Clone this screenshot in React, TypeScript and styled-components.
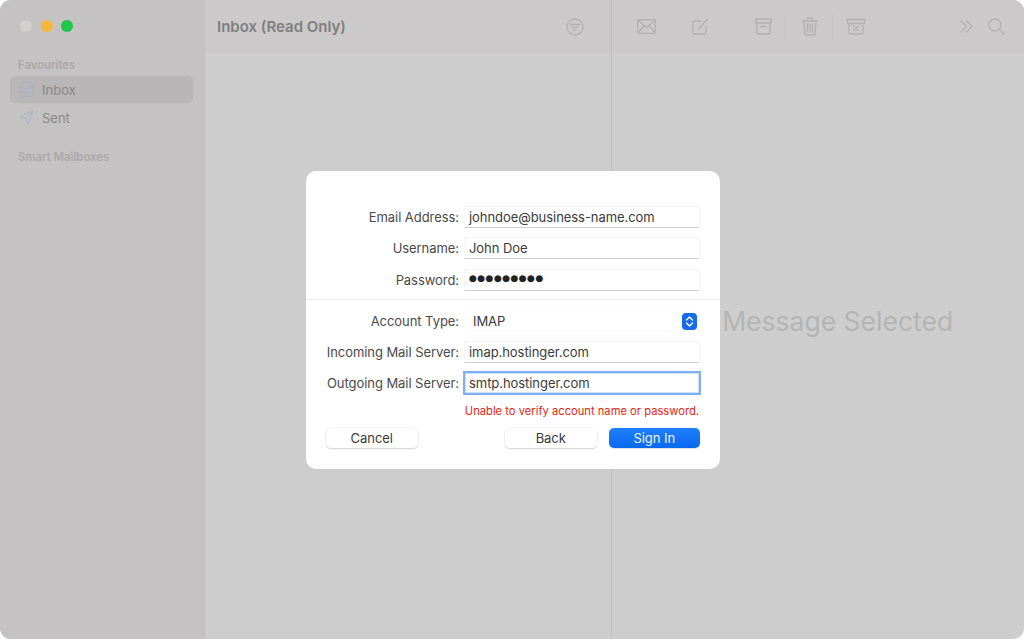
import React from 'react';
import styled, { createGlobalStyle } from 'styled-components';

const GlobalStyle = createGlobalStyle`
  html, body {
    margin: 0;
    padding: 0;
    background: #ffffff;
    font-family: Inter, 'Noto Sans', 'Liberation Sans', sans-serif;
  }
`;

const Window = styled.div`
  position: relative;
  display: flex;
  width: 1024px;
  height: 639px;
  border-radius: 11px;
  overflow: hidden;
  background: #cdcdcd;
`;

const Sidebar = styled.aside`
  display: flex;
  flex-direction: column;
  flex: 0 0 205px;
  padding: 20px 11px 0 10px;
  box-sizing: border-box;
  background: #c4c2c2;
  border-right: 1px solid #c1bfbf;
`;

const TrafficLights = styled.div`
  display: flex;
  gap: 8.5px;
  padding-left: 10px;
  height: 12px;
`;

const Light = styled.span<{ $color: string }>`
  width: 12px;
  height: 12px;
  border-radius: 50%;
  background: ${p => p.$color};
`;

const SectionTitle = styled.div<{ $top: number }>`
  margin: ${p => p.$top}px 0 0 8px;
  height: 14px;
  line-height: 14px;
  font-size: 11.3px;
  font-weight: 600;
  color: #aaa8a8;
`;

const NavRow = styled.div<{ $active?: boolean }>`
  display: flex;
  align-items: center;
  gap: 8px;
  height: 27px;
  margin-top: ${p => (p.$active ? 4 : 1)}px;
  padding-left: 9px;
  border-radius: 5px;
  font-size: 13px;
  color: #8a8888;
  background: ${p => (p.$active ? '#b8b6b6' : 'transparent')};
`;

const ListPane = styled.section`
  display: flex;
  flex-direction: column;
  flex: 0 0 407px;
  box-sizing: border-box;
  border-right: 1px solid #bfbdbd;
`;

const ListBar = styled.header`
  display: flex;
  align-items: center;
  justify-content: space-between;
  height: 53px;
  padding: 0 27px 0 12px;
  background: #cbc9c9;
`;

const ListTitle = styled.h1`
  margin: 0;
  font-size: 15px;
  font-weight: 600;
  color: #807e7e;
`;

const DetailPane = styled.section`
  display: flex;
  flex-direction: column;
  flex: 1;
`;

const DetailBar = styled.header`
  display: flex;
  align-items: center;
  height: 53px;
  padding-left: 25px;
  background: #cbc9c9;
`;

const ToolIcon = styled.svg<{ $gap?: number }>`
  flex: none;
  margin-left: ${p => p.$gap ?? 0}px;
  fill: none;
  stroke: #b2b0b0;
  stroke-width: 1.3;
  stroke-linecap: round;
  stroke-linejoin: round;
`;

const ToolSeparator = styled.span<{ $gap: number }>`
  flex: none;
  width: 1px;
  height: 26px;
  margin-left: ${p => p.$gap}px;
  background: #c6c4c4;
`;

const EmptyState = styled.div`
  flex: 1;
  display: flex;
  align-items: center;
  justify-content: center;
  padding: 0 4px 50px 0;
  font-size: 26.5px;
  color: #b4b4b4;
`;

const Dialog = styled.form`
  position: absolute;
  left: 306px;
  top: 171px;
  width: 414px;
  height: 298px;
  box-sizing: border-box;
  padding-top: 36px;
  display: flex;
  flex-direction: column;
  border-radius: 10px;
  background: #ffffff;
  color: #3a3a3a;
  font-size: 13px;
  letter-spacing: -0.06px;
`;

const FieldGroup = styled.div<{ $rows: string }>`
  display: grid;
  grid-template-columns: 153px 234px;
  grid-template-rows: ${p => p.$rows};
  column-gap: 6px;
  align-items: start;
`;

const Label = styled.label`
  line-height: 20px;
  text-align: right;
  color: #4a4a4a;
  white-space: nowrap;
`;

const TextField = styled.div<{ $focused?: boolean }>`
  height: 20px;
  line-height: 20px;
  padding-left: 4px;
  box-sizing: border-box;
  background: #ffffff;
  color: #3a3a3a;
  white-space: nowrap;
  box-shadow: ${p =>
    p.$focused
      ? '0 0 0 2px #7fb0f2, inset 0 0 0 0.5px #9ec4f5'
      : '0 1px 0 #cfcfcf, 0 0 0 1px #f5f5f5'};
`;

const Dots = styled.span`
  display: block;
  height: 20px;
  line-height: 17px;
  font-family: 'DejaVu Sans', sans-serif;
  font-size: 9px;
  letter-spacing: 0.45px;
  color: #222222;
`;

const Divider = styled.hr`
  height: 1px;
  margin: 9px 0 11px;
  border: 0;
  background: #ececec;
`;

const SelectField = styled.div`
  display: flex;
  align-items: center;
  justify-content: space-between;
  height: 20px;
  padding: 0 2px 0 8px;
  box-sizing: border-box;
  border-radius: 5px;
  box-shadow: 0 0 0 0.5px #f8f8f8;
  line-height: 18px;
`;

const ErrorText = styled.p`
  margin: 11px 21px 0 0;
  height: 14px;
  line-height: 14px;
  text-align: right;
  font-size: 11.2px;
  letter-spacing: 0;
  color: #ea2410;
`;

const Actions = styled.div`
  display: flex;
  gap: 12px;
  margin-top: 10px;
  padding: 0 20px;
`;

const Button = styled.button<{ $primary?: boolean; $spaced?: boolean }>`
  width: 91.5px;
  height: 20px;
  padding: 0;
  border: 0;
  border-radius: 5px;
  font: inherit;
  letter-spacing: inherit;
  margin-right: ${p => (p.$spaced ? 75.5 : 0)}px;
  color: ${p => (p.$primary ? '#f2f7ff' : '#3a3a3a')};
  background: ${p => (p.$primary ? 'linear-gradient(#1f7ffb, #0a68ee)' : '#ffffff')};
  box-shadow: ${p =>
    p.$primary ? '0 1px 1px rgba(0, 0, 0, 0.12)' : '0 0 0 0.5px #ececec, 0 1px 1.5px rgba(0, 0, 0, 0.25)'};
`;

const InboxIcon = () => (
  <svg width="15" height="15" viewBox="0 0 15 15" fill="none" stroke="#a3b2c6" strokeWidth="1">
    <rect x="0.5" y="0.5" width="14" height="14" rx="3" />
    <path d="M0.5 5h3.500l1 1.500h5l1-1.500h3.500M0.500 9.500h3.500l1 1.500h5l1-1.500h3.500" />
  </svg>
);

const SentIcon = () => (
  <svg width="15" height="15" viewBox="0 0 15 15" fill="none" stroke="#a3b4c9" strokeWidth="1" strokeLinejoin="round">
    <path d="M14 1L1 6.500l5.500 2L9 14.500zM14 1L6.500 8.500" />
  </svg>
);

const StepperIcon = () => (
  <svg width="15" height="17" viewBox="0 0 15 17">
    <rect width="15" height="17" rx="4" fill="#1769ee" />
    <path d="M4.500 7l3-3 3 3M4.500 10l3 3 3-3" fill="none" stroke="#ffffff" strokeWidth="1.400" strokeLinecap="round" strokeLinejoin="round" />
  </svg>
);

const App: React.FC = () => {
  return (
    <>
      <GlobalStyle />
      <Window>
        <Sidebar>
          <TrafficLights>
            <Light $color="#d4d0d0" />
            <Light $color="#f5b83d" />
            <Light $color="#1ec64a" />
          </TrafficLights>
          <SectionTitle $top={26}>Favourites</SectionTitle>
          <NavRow $active>
            <InboxIcon />
            Inbox
          </NavRow>
          <NavRow>
            <SentIcon />
            Sent
          </NavRow>
          <SectionTitle $top={19}>Smart Mailboxes</SectionTitle>
        </Sidebar>

        <ListPane>
          <ListBar>
            <ListTitle>Inbox (Read Only)</ListTitle>
            <ToolIcon width="18" height="18" viewBox="0 0 18 18">
              <circle cx="9" cy="9" r="8" />
              <path d="M4.500 6.500h9M6 9.200h6M7.500 12h3" />
            </ToolIcon>
          </ListBar>
        </ListPane>

        <DetailPane>
          <DetailBar>
            <ToolIcon width="19" height="15" viewBox="0 0 19 15">
              <rect x="0.700" y="0.700" width="17.600" height="13.600" rx="1.500" />
              <path d="M1 1.500l8.500 7 8.500-7M1 13.500l6-6.500M18 13.500l-6-6.500" />
            </ToolIcon>
            <ToolIcon $gap={36} width="17" height="17" viewBox="0 0 17 17">
              <path d="M9 3H2.500A1.500 1.500 0 0 0 1 4.500v10A1.500 1.500 0 0 0 2.500 16h10a1.500 1.500 0 0 0 1.500-1.500V8" />
              <path d="M6.500 11L15.500 1" />
            </ToolIcon>
            <ToolIcon $gap={46} width="17" height="17" viewBox="0 0 17 17">
              <rect x="0.700" y="1" width="15.600" height="4" rx="0.800" />
              <path d="M2 5v10a1 1 0 0 0 1 1h11a1 1 0 0 0 1-1V5M6 8.500h5" />
            </ToolIcon>
            <ToolSeparator $gap={13} />
            <ToolIcon $gap={16} width="16" height="19" viewBox="0 0 16 19">
              <path d="M0.700 4h14.600M5.500 4V2a1 1 0 0 1 1-1h3a1 1 0 0 1 1 1v2M2 4l0.800 13a1.200 1.200 0 0 0 1.200 1h8a1.200 1.200 0 0 0 1.200-1L14 4M5.500 7v8M8 7v8M10.500 7v8" />
            </ToolIcon>
            <ToolSeparator $gap={14} />
            <ToolIcon $gap={13} width="20" height="17" viewBox="0 0 20 17">
              <path d="M0.700 1.500h18.600l-1 4H1.700zM3 5.500v9.500a1 1 0 0 0 1 1h12a1 1 0 0 0 1-1V5.500M7.500 8l5 4.500M12.500 8l-5 4.500" />
            </ToolIcon>
            <ToolIcon $gap={94} width="13" height="13" viewBox="0 0 13 13" style={{ strokeWidth: 1.3 }}>
              <path d="M1 1l5.500 5.500L1 12M6.500 1L12 6.500 6.500 12" />
            </ToolIcon>
            <ToolIcon $gap={15} width="17" height="17" viewBox="0 0 17 17">
              <circle cx="7" cy="7" r="6" />
              <path d="M11.500 11.500l4.500 4.500" />
            </ToolIcon>
          </DetailBar>
          <EmptyState>No Message Selected</EmptyState>
        </DetailPane>

        <Dialog>
          <FieldGroup $rows="31px 32px 20px">
            <Label>Email Address:</Label>
            <TextField>johndoe@business-name.com</TextField>
            <Label>Username:</Label>
            <TextField>John Doe</TextField>
            <Label>Password:</Label>
            <TextField>
              <Dots>●●●●●●●●●</Dots>
            </TextField>
          </FieldGroup>
          <Divider />
          <FieldGroup $rows="31px 31px 20px">
            <Label>Account Type:</Label>
            <SelectField>
              IMAP
              <StepperIcon />
            </SelectField>
            <Label>Incoming Mail Server:</Label>
            <TextField>imap.hostinger.com</TextField>
            <Label>Outgoing Mail Server:</Label>
            <TextField $focused>smtp.hostinger.com</TextField>
          </FieldGroup>
          <ErrorText>Unable to verify account name or password.</ErrorText>
          <Actions>
            <Button type="button" $spaced>Cancel</Button>
            <Button type="button">Back</Button>
            <Button type="button" $primary>Sign In</Button>
          </Actions>
        </Dialog>
      </Window>
    </>
  );
};

export default App;
